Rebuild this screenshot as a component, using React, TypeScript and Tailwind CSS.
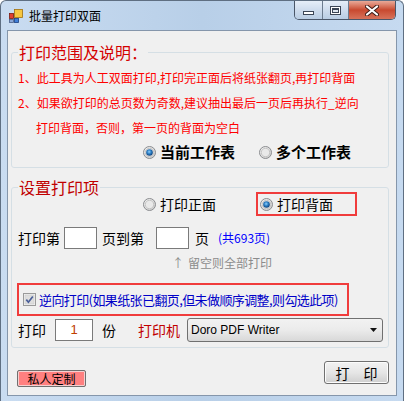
import React from 'react';

const CJK = "font-['Noto_Sans_CJK_SC','Noto_Sans',sans-serif]";

const Radio: React.FC<{ checked?: boolean; id: string }> = ({ checked, id }) => (
    <svg width="13" height="13" viewBox="0 0 13 13" className="shrink-0">
        <defs>
            <linearGradient id={`o-${id}`} x1="0" y1="0" x2="1" y2="1">
                <stop offset="0" stopColor="#f4f4f4" />
                <stop offset="1" stopColor="#c9c9c9" />
            </linearGradient>
            <radialGradient id={`d-${id}`} cx="0.45" cy="0.4" r="0.6">
                <stop offset="0" stopColor="#8fd0ff" />
                <stop offset="0.5" stopColor="#2c7fc4" />
                <stop offset="1" stopColor="#0d3f7a" />
            </radialGradient>
        </defs>
        <circle cx="6.5" cy="6.5" r="6" fill={`url(#o-${id})`} stroke="#8a8c8f" strokeWidth="1" />
        <circle cx="6.5" cy="6.5" r="4.2" fill="#e9e9e9" stroke="#bdbdbd" strokeWidth="0.8" />
        {checked && <circle cx="6.5" cy="6.5" r="3.3" fill={`url(#d-${id})`} />}
    </svg>
);

const Check: React.FC = () => (
    <svg width="13" height="13" viewBox="0 0 13 13" className="shrink-0">
        <rect x="0.5" y="0.5" width="12" height="12" fill="#f4f4f4" stroke="#9a9a9a" />
        <rect x="2" y="2" width="9" height="9" fill="#dedede" stroke="#c8c8c8" strokeWidth="0.6" />
        <path d="M3.3 6.6 L5.4 9.2 L9.8 3.4" fill="none" stroke="#4b5f99" strokeWidth="1.7" />
    </svg>
);

const AppIcon: React.FC = () => (
    <svg width="14" height="14" viewBox="0 0 14 14">
        <rect x="0.5" y="4.5" width="4" height="5" fill="#e04030" stroke="#7a1a10" strokeWidth="0.8" />
        <rect x="5.5" y="0.5" width="8" height="8" fill="#f6c640" stroke="#a07010" strokeWidth="0.8" />
        <rect x="5.5" y="9.5" width="4" height="4" fill="#3f7fd8" stroke="#1a3f80" strokeWidth="0.8" />
        <rect x="0.5" y="10.5" width="4" height="3" fill="#8aa8d8" stroke="#4a5f88" strokeWidth="0.8" />
    </svg>
);

const TitleButtons: React.FC = () => (
    <div className="flex h-[19px] border border-t-0 border-[#4a5668] rounded-b-[5px] overflow-hidden">
        <div className="w-[28px] flex items-end justify-center pb-[4px] bg-gradient-to-b from-[#e6eef8] via-[#cfdced] to-[#b9cde3] border-r border-[#6d7c8f]">
            <div className="w-[11px] h-[4px] bg-white border border-[#3c4656]" />
        </div>
        <div className="w-[26px] flex items-center justify-center bg-gradient-to-b from-[#e6eef8] via-[#cfdced] to-[#b9cde3] border-r border-[#6d7c8f]">
            <div className="w-[11px] h-[9px] border border-[#3c4656] bg-white p-[1px]">
                <div className="w-full h-full border-[1.5px] border-t-[2px] border-[#3c4656] bg-[#dfe6ef]" />
            </div>
        </div>
        <div className="w-[46px] flex items-center justify-center bg-gradient-to-b from-[#e8a998] via-[#c8492f] to-[#d7725a]">
            <svg width="14" height="11" viewBox="0 0 14 11">
                <path d="M2 1.5 L12 9.5 M12 1.5 L2 9.5" stroke="#3d1c16" strokeWidth="4" strokeLinecap="round" />
                <path d="M2 1.5 L12 9.5 M12 1.5 L2 9.5" stroke="#ffffff" strokeWidth="2.2" strokeLinecap="round" />
            </svg>
        </div>
    </div>
);

const Field: React.FC<{ w: string; children?: React.ReactNode }> = ({ w, children }) => (
    <div className={`${w} h-[22px] bg-white border border-[#7a7a7a] flex items-center justify-center`}>{children}</div>
);

export default function App() {
    return (
        <div className={`w-[404px] h-[401px] flex flex-col bg-gradient-to-r from-[#c9dcf1] via-[#b8cfe8] to-[#c6daf0] border-x border-t border-[#5f6f82] rounded-t-[6px] overflow-hidden ${CJK}`}>
            {/* title bar */}
            <div className="h-[29px] flex items-start pl-[8px] pr-[7px] shrink-0">
                <div className="flex items-center gap-[6px] h-[29px]">
                    <AppIcon />
                    <span className="text-[12px] text-black leading-none">批量打印双面</span>
                </div>
                <div className="ml-auto">
                    <TitleButtons />
                </div>
            </div>

            {/* client */}
            <div className="mx-[6px] mb-[5px] flex-1 border border-[#8596ab] bg-[#f0f0f0] flex flex-col">
                <fieldset className="ml-[3px] mt-[11px] w-[378px] h-[126px] border border-[#d5dfe5] rounded-[3px]">
                    <legend className="ml-[6px] px-[1px] text-[16px] leading-[20px] text-[#d40000]">打印范围及说明：</legend>
                    <div className="px-[6px] pt-[3px] text-[12px] leading-[25px] text-[#ff0000]">
                        <div>1、此工具为人工双面打印,打印完正面后将纸张翻页,再打印背面</div>
                        <div>2、如果欲打印的总页数为奇数,建议抽出最后一页后再执行_逆向</div>
                        <div className="pl-[18px]">打印背面，否则，第一页的背面为空白</div>
                    </div>
                    <div className="h-[24px] flex items-center pl-[131px]">
                        <div className="flex items-center gap-[4px]">
                            <Radio checked id="r1" />
                            <span className="text-[15px] font-bold text-black w-[75px] whitespace-nowrap">当前工作表</span>
                        </div>
                        <div className="flex items-center gap-[4px] ml-[24px]">
                            <Radio id="r2" />
                            <span className="text-[15px] font-bold text-black whitespace-nowrap">多个工作表</span>
                        </div>
                    </div>
                </fieldset>

                <fieldset className="ml-[3px] mt-[9px] w-[378px] h-[171px] border border-[#d5dfe5] rounded-[3px]">
                    <legend className="ml-[6px] px-[1px] text-[16px] leading-[20px] text-[#c00000]">设置打印项</legend>
                    <div className="-mt-[5px] h-[24px] flex items-center pl-[131px] text-[14px] text-black">
                        <div className="flex items-center gap-[4px] w-[113px]">
                            <Radio id="r3" />
                            <span className="whitespace-nowrap">打印正面</span>
                        </div>
                        <div className="h-[24px] w-[101px] border-2 border-[#f03c3c] flex items-center gap-[4px] pl-[2px]">
                            <Radio checked id="r4" />
                            <span className="whitespace-nowrap">打印背面</span>
                        </div>
                    </div>

                    <div className="mt-[11px] h-[22px] flex items-center pl-[6px] text-[14px] text-black whitespace-nowrap">
                        <span>打印第</span>
                        <div className="ml-[4px]"><Field w="w-[33px]" /></div>
                        <span className="ml-[5px]">页到第</span>
                        <div className="ml-[12px]"><Field w="w-[33px]" /></div>
                        <span className="ml-[6px]">页</span>
                        <span className="ml-[9px] text-[12px] text-[#0000ff]">(共693页)</span>
                    </div>

                    <div className="mt-[6px] h-[16px] flex items-center pl-[160px] text-[12px] text-[#8c8c8c] whitespace-nowrap">
                        <span className="w-[16px]">↑</span>
                        <span>留空则全部打印</span>
                    </div>

                    <div className="mt-[12px] ml-[5px] w-[332px] h-[33px] border-2 border-[#f03c3c] flex items-center gap-[3px] pl-[4px]">
                        <Check />
                        <span className="text-[13px] tracking-[-0.6px] text-[#0000c8] whitespace-nowrap">逆向打印(如果纸张已翻页,但未做顺序调整,则勾选此项)</span>
                    </div>

                    <div className="mt-[3px] h-[22px] flex items-center pl-[6px] text-[14px] text-black whitespace-nowrap">
                        <span>打印</span>
                        <div className="ml-[9px]">
                            <Field w="w-[38px]">
                                <span className="text-[13px] text-[#c04000] font-['Liberation_Sans',sans-serif]">1</span>
                            </Field>
                        </div>
                        <span className="ml-[9px]">份</span>
                        <span className="ml-[22px] text-[#c00000]">打印机</span>
                        <div className="ml-[7px] w-[196px] h-[24px] border border-[#707070] rounded-[3px] bg-gradient-to-b from-[#f2f2f2] via-[#ebebeb] to-[#d8d8d8] flex items-center pl-[3px] pr-[5px]">
                            <span className="text-[12px] text-black font-['Liberation_Sans',sans-serif]">Doro PDF Writer</span>
                            <svg width="7" height="4" viewBox="0 0 7 4" className="ml-auto">
                                <path d="M0 0 H7 L3.5 4 Z" fill="#111" />
                            </svg>
                        </div>
                    </div>
                </fieldset>

                <div className="mt-[13px] flex items-start justify-between pl-[9px] pr-[7px]">
                    <button className="mt-[9px] w-[69px] h-[17px] border border-[#707070] rounded-[2px] bg-[#ff8080] shadow-[inset_0_0_0_1px_#f4d0d0] flex items-center justify-center text-[12px] leading-none text-black">
                        私人定制
                    </button>
                    <button className="w-[65px] h-[23px] border border-[#707070] rounded-[3px] bg-gradient-to-b from-[#f2f2f2] via-[#e6e6e6] to-[#cfcfcf] shadow-[inset_0_0_0_1px_#fcfcfc] flex items-center justify-center gap-[14px] text-[14px] leading-none text-black">
                        <span>打</span>
                        <span>印</span>
                    </button>
                </div>
            </div>
        </div>
    );
}
